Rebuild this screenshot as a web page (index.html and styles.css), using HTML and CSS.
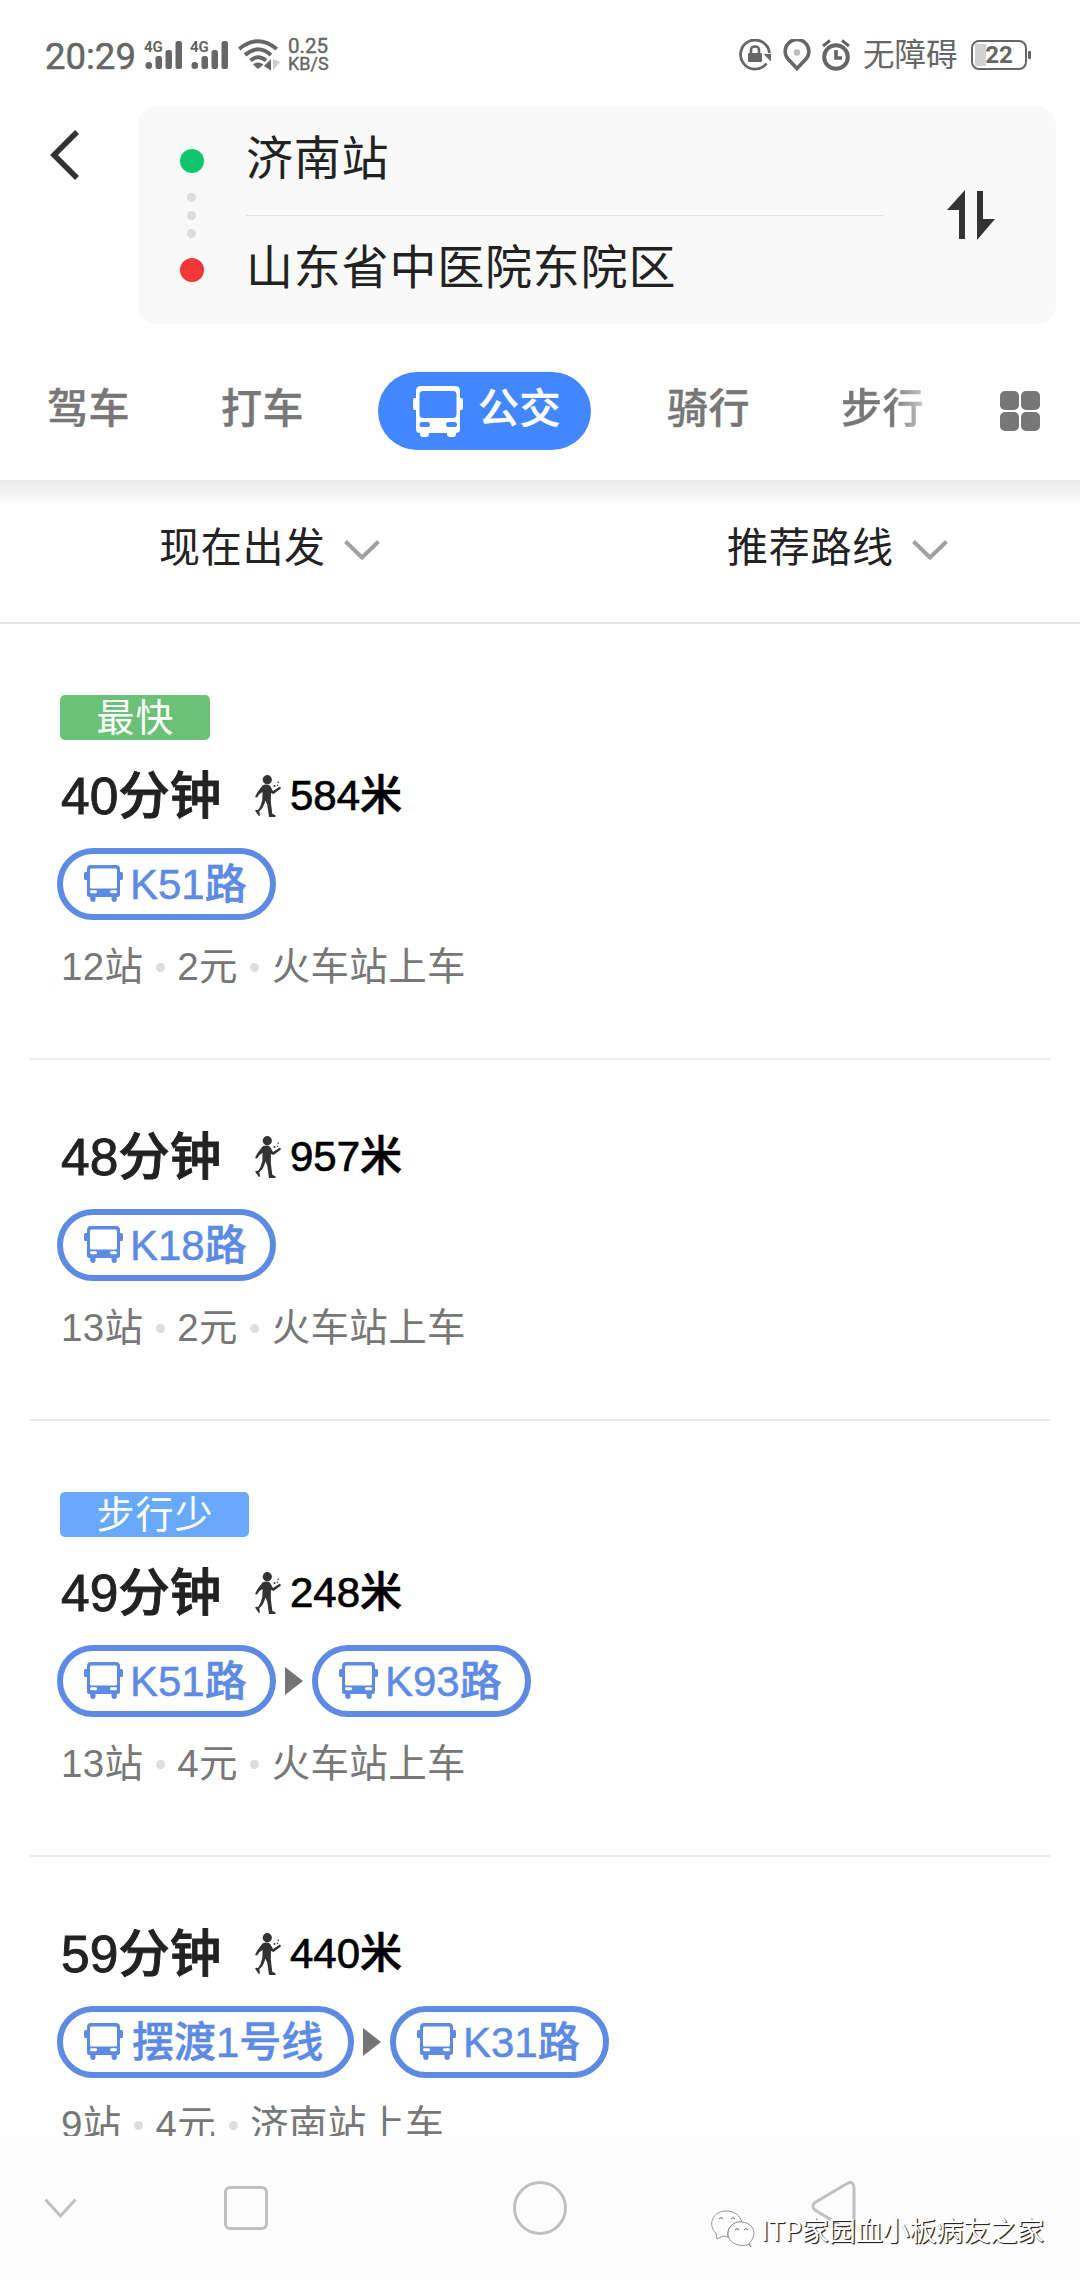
FILE: index.html
```
<!DOCTYPE html>
<html lang="zh-CN">
<head>
<meta charset="utf-8">
<title>公交路线</title>
<link rel="stylesheet" href="styles.css">
</head>
<body>
<svg width="0" height="0" class="defs">
  <symbol id="bus" viewBox="0 0 39 37">
    <path fill="currentColor" fill-rule="evenodd" d="M7 0H32Q36 0 36 4V7H37.500Q39 7 39 8.500V13.500Q39 15 37.500 15H36V29.500Q36 32 33.500 32H32.800V34.500Q32.800 37 30.300 37T27.500 34.500V32H11.500V34.500Q11.500 37 9 37T6.200 34.500V32H5.500Q3 32 3 29.500V15H1.500Q0 15 0 13.500V8.500Q0 7 1.500 7H3V4Q3 0 7 0ZM7.500 3.500Q6 3.500 6 5V22Q6 23.500 7.500 23.500H31.500Q33 23.500 33 22V5Q33 3.500 31.500 3.500ZM7.500 25.300Q6 25.300 6 26.700T7.500 28.200H11.500Q13 28.200 13 26.700T11.500 25.300ZM27.500 25.300Q26 25.300 26 26.700T27.500 28.200H31.500Q33 28.200 33 26.700T31.500 25.300Z"/>
  </symbol>
  <symbol id="walk" viewBox="0 0 26 42">
    <circle cx="12.300" cy="4.700" r="4.600"/>
    <path d="M7.500 10.500C10 9 14 9 15.500 11.500L18 16L25 11.500L26 13.500L18.500 19L16 18L15.800 26L16.300 31L17.300 38.800L20.500 40.200V42H14L12.300 30L10.500 25.500L9.500 28.500L7.500 33L4.300 36.200L5 40.500L3.800 41L0 35.500L1.300 34.800L3 35L5.300 31.500L7.300 25L7.600 17L4.500 19L2 22.500L0 22L2.500 17Z"/>
    <circle cx="19.500" cy="11" r="1"/><circle cx="23.300" cy="7.300" r=".8"/><circle cx="22.500" cy="10.300" r=".8"/>
  </symbol>
  <symbol id="signal" viewBox="0 0 38 28">
    <rect x="1.500" y="21" width="6.500" height="7" rx="3"/><rect x="11.500" y="15" width="6.500" height="13" rx="2.500"/><rect x="21.500" y="9" width="6.500" height="19" rx="2.500"/><rect x="31.500" y="0" width="6.500" height="28" rx="2.500"/>
  </symbol>
</svg>

<header class="status">
  <span class="clock">20:29</span>
  <span class="cell"><svg class="bars"><use href="#signal"/></svg><small>4G</small></span>
  <span class="cell cell-2"><svg class="bars"><use href="#signal"/></svg><small>4G</small></span>
  <svg class="wifi" viewBox="0 0 42 32"><g fill="none" stroke="#666" stroke-width="3.800"><path d="M1.200 10Q20 -5.500 38.800 10"/><path d="M7 16Q20 4.500 33 16"/><path d="M12.500 21.500Q20 15 28 21.500"/></g><path fill="#666" d="M15 25.500Q20 21.500 25.500 25.500L20 30ZM26 27L33 20V31.500Z"/><path fill="#ccc" d="M35 20V31.500L42 23Z"/></svg>
  <span class="speed"><b>0.25</b><i>KB/S</i></span>
  <span class="spacer"></span>
  <svg class="s-lock" viewBox="0 0 32 32"><path d="M30.500 14A14.500 14.500 0 1 0 27.500 24.500" fill="none" stroke="#666" stroke-width="2.800"/><path fill="#666" d="M24.500 15H32V22.500ZM9 15Q9 14 10 14H22Q23 14 23 15V22Q23 23 22 23H10Q9 23 9 22Z"/><path d="M12 14V11Q12 7.500 16 7.500T20 11V14" fill="none" stroke="#666" stroke-width="2.600"/></svg>
  <svg class="s-pin" viewBox="0 0 28 32"><path d="M14 29.500L5 20A11.800 11.800 0 1 1 23 20Z" fill="none" stroke="#666" stroke-width="3.600"/><circle cx="14" cy="13.500" r="3.300" fill="#bbb"/></svg>
  <svg class="s-alarm" viewBox="0 0 28 32"><circle cx="14" cy="18" r="11.800" fill="none" stroke="#666" stroke-width="4"/><path d="M14 11V19H20" fill="none" stroke="#666" stroke-width="3.600"/><path d="M1 7L8 1.500M27 7L20 1.500" stroke="#666" stroke-width="3"/></svg>
  <span class="mode">无障碍</span>
  <span class="battery">22</span>
</header>

<section class="search">
  <svg class="back" viewBox="0 0 30 50"><path d="M27 2L4 25L27 48" fill="none" stroke="#333" stroke-width="5.600"/></svg>
  <div class="box">
    <div class="marks"><i class="start"></i><i class="dot"></i><i class="dot"></i><i class="dot"></i><i class="end"></i></div>
    <div class="places"><div class="from">济南站</div><div class="to">山东省中医院东院区</div></div>
    <svg class="swap" viewBox="0 0 49 50"><path fill="#333" d="M18 0V49H12V20H0ZM30 1H36V29H48L30 50Z"/></svg>
  </div>
</section>

<nav class="tabs">
  <span class="tab">驾车</span><span class="tab">打车</span>
  <span class="active"><svg viewBox="0 0 50 51"><path fill="#fff" fill-rule="evenodd" d="M8 0H42Q47 0 47 5V12H48Q50 12 50 14V22Q50 24 48 24H47V43Q47 47 43 47V48Q43 51 40 51H37Q34 51 34 48V47H16V48Q16 51 13 51H10Q7 51 7 48V47Q3 47 3 43V24H2Q0 24 0 22V14Q0 12 2 12H3V5Q3 0 8 0ZM10 5Q6.500 5 6.500 9V28Q6.500 32 10 32H40Q43.500 32 43.500 28V9Q43.500 5 40 5ZM9 36Q6.500 36 6.500 38.500T9 41H14.500Q17 41 17 38.500T14.500 36ZM35.500 36Q33 36 33 38.500T35.500 41H41.500Q44 41 44 38.500T41.500 36Z"/></svg><span>公交</span></span>
  <span class="tab">骑行</span><span class="tab fade">步行</span>
  <span class="grid"><i></i><i></i><i></i><i></i></span>
</nav>

<main class="list">
  <div class="filters">
    <span class="filter">现在出发<svg viewBox="0 0 36 20"><path d="M1.500 1.500L18 17.500L34.500 1.500" fill="none" stroke="#a0a0a0" stroke-width="4"/></svg></span>
    <span class="filter second">推荐路线<svg viewBox="0 0 36 20"><path d="M1.500 1.500L18 17.500L34.500 1.500" fill="none" stroke="#a0a0a0" stroke-width="4"/></svg></span>
  </div>

  <article class="route tagged">
    <div class="tag fast">最快</div>
    <div class="time"><strong>40分钟</strong><svg class="walk"><use href="#walk"/></svg><span>584米</span></div>
    <div class="lines"><span class="line"><svg><use href="#bus"/></svg>K51路</span></div>
    <div class="meta">12站<i></i>2元<i></i>火车站上车</div>
  </article>
  <article class="route">
    <div class="time"><strong>48分钟</strong><svg class="walk"><use href="#walk"/></svg><span>957米</span></div>
    <div class="lines"><span class="line"><svg><use href="#bus"/></svg>K18路</span></div>
    <div class="meta">13站<i></i>2元<i></i>火车站上车</div>
  </article>
  <article class="route tagged">
    <div class="tag less">步行少</div>
    <div class="time"><strong>49分钟</strong><svg class="walk"><use href="#walk"/></svg><span>248米</span></div>
    <div class="lines"><span class="line"><svg><use href="#bus"/></svg>K51路</span><b class="next"></b><span class="line"><svg><use href="#bus"/></svg>K93路</span></div>
    <div class="meta">13站<i></i>4元<i></i>火车站上车</div>
  </article>
  <article class="route">
    <div class="time"><strong>59分钟</strong><svg class="walk"><use href="#walk"/></svg><span>440米</span></div>
    <div class="lines"><span class="line wide"><svg><use href="#bus"/></svg>摆渡1号线</span><b class="next"></b><span class="line"><svg><use href="#bus"/></svg>K31路</span></div>
    <div class="meta">9站<i></i>4元<i></i>济南站上车</div>
  </article>
</main>

<footer class="sysnav">
  <svg class="n-down" viewBox="0 0 33 20"><path d="M1.500 1.500L16.500 18L31.500 1.500"/></svg>
  <svg class="n-square" viewBox="0 0 44 44"><rect x="1.500" y="1.500" width="41" height="41" rx="4.500"/></svg>
  <svg class="n-circle" viewBox="0 0 54 54"><circle cx="27" cy="27" r="25.500"/></svg>
  <svg class="n-back" viewBox="0 0 45 52"><path d="M37 2L4 21.500Q0 25 4 29L37 49Q43 51 43 46V6Q42 0 37 2Z"/></svg>
  <div class="watermark">
    <svg viewBox="0 0 44 38"><g fill="#fff" stroke="#777" stroke-width=".8"><path d="M5 23C-4 15 2 1 15 1C24 1 29 6 31 12C22 12 15 18 17 27L12 26L6 29Z"/><path d="M38 34C31 38 17 34 17 24C17 15 25 11 31 12C43 13 47 25 38 33L40 37Z"/></g><g fill="none" stroke="#666"><path d="M8 9Q10 6 12 9M20 9Q22 6 24 9M24 20Q26 17 28 20M33 20Q35 17 37 20"/></g></svg>
    <span>ITP家园血小板病友之家</span>
  </div>
</footer>
</body>
</html>
```
FILE: styles.css
```
* { box-sizing: border-box; }
body {
  margin: 0;
  width: 1080px;
  height: 2280px;
  overflow: hidden;
  display: flex;
  flex-direction: column;
  background: #fff;
  color: #222;
  font-family: "Liberation Sans", "Noto Sans CJK SC", sans-serif;
  white-space: nowrap;
}
svg { display: block; flex: none; }
i { font-style: normal; }
.defs { position: absolute; }

/* status bar */
.status {
  height: 107px;
  flex: none;
  display: flex;
  align-items: flex-start;
  padding: 39px 53px 0 45px;
  color: #666;
  fill: #666;
  font-family: Roboto, "Noto Sans CJK SC", sans-serif;
}
.clock { width: 99px; font-size: 36.500px; line-height: 35px; -webkit-text-stroke: .5px #666; }
.cell { position: relative; width: 38px; height: 28px; margin-top: 2px; }
.cell-2 { margin-left: 8px; }
.bars { width: 38px; height: 28px; }
.cell small { position: absolute; left: 0; top: 0; font-size: 15px; line-height: 12px; font-weight: 700; }
.wifi { width: 42px; height: 32px; margin-left: 10px; }
.speed { margin: -2px 0 0 8px; display: flex; flex-direction: column; }
.speed b, .speed i { line-height: 18px; -webkit-text-stroke: .4px #666; }
.speed b { font-size: 20.500px; font-weight: 400; }
.speed i { font-size: 18px; line-height: 17px; }
.spacer { flex: 1; }
.s-lock { width: 32px; height: 32px; }
.s-pin { width: 28px; height: 32px; margin-left: 12px; }
.s-alarm { width: 28px; height: 32px; margin-left: 11px; }
.mode { margin-left: 13px; width: 108px; font-size: 31.500px; line-height: 33px; }
.battery {
  position: relative;
  width: 56px;
  height: 30px;
  margin-top: 1px;
  border: 2px solid #666;
  border-radius: 8px;
  background: linear-gradient(#d2d2d2, #d2d2d2) 2px 2px / 11px 22px no-repeat;
  font-size: 24px;
  font-weight: 700;
  line-height: 27px;
  text-align: center;
}
.battery::after { content: ""; position: absolute; right: -6px; top: 9px; width: 3px; height: 8px; background: #666; border-radius: 1px; }

/* origin and destination */
.search { height: 217px; flex: none; display: flex; padding-left: 50px; }
.back { width: 30px; height: 50px; margin-top: 23px; }
.box {
  margin-left: 58px;
  width: 918px;
  height: 217px;
  display: flex;
  background: #f9f9f9;
  border-radius: 18px;
}
.marks { width: 24px; margin: 42px 0 0 42px; display: flex; flex-direction: column; align-items: center; }
.start, .end { width: 24px; height: 24px; border-radius: 50%; background: #0fc66e; margin-bottom: 20px; }
.end { background: #f13838; margin-top: 11px; }
.dot { width: 9px; height: 9px; border-radius: 50%; background: #ddd; margin: 0 1px 9px 0; }
.places { width: 638px; margin: 0 2px 0 42px; font-size: 47px; letter-spacing: .8px; }
.from { height: 109px; line-height: 104px; border-bottom: 1px solid #e2e2e2; }
.to { line-height: 104px; }
.swap { width: 49px; height: 50px; margin: 83px 0 0 61px; }

/* travel modes */
.tabs {
  height: 156px;
  flex: none;
  display: flex;
  align-items: flex-start;
  padding: 48px 40px 0 47px;
  color: #777;
  font-size: 41px;
  font-weight: 500;
}
.tab, .active > span { line-height: 75px; letter-spacing: .5px; -webkit-text-stroke: .4px; }
.tab { width: 174px; }
.active {
  display: flex;
  width: 213px;
  height: 78px;
  margin: 0 76px 0 -17px;
  padding-left: 35px;
  border-radius: 39px;
  background: #4387ff;
  color: #fff;
}
.active svg { width: 50px; height: 51px; margin: 14px 15px 0 0; }
.fade {
  width: 159px;
  background: linear-gradient(90deg, #777 50px, #c8c8c8 84px);
  background-clip: text;
  -webkit-background-clip: text;
  color: transparent;
}
.grid { display: grid; grid-template-columns: 19px 19px; gap: 2px; margin-top: 19px; }
.grid i { height: 19px; border-radius: 5px; background: #777; }

.list { flex: 1; min-height: 0; overflow: hidden; background: linear-gradient(#e9e9e9, #f4f4f4 14px, #fff 26px) no-repeat; }
.filters { height: 144px; display: flex; padding: 35px 0 0 159px; border-bottom: 2px solid #e3e3e3; }
.filter { width: 568px; display: flex; font-size: 41px; line-height: 67px; letter-spacing: .7px; }
.filter svg { width: 36px; height: 20px; margin: 25px 0 0 18px; }
.second { width: 300px; }

/* route cards */
.route { height: 361px; margin: 0 30px; padding: 67px 0 0 27px; border-bottom: 2px solid #ececec; }
.tagged { height: 436px; padding-top: 71px; }
.tag {
  width: max-content;
  height: 45px;
  margin: 0 0 26px 3px;
  padding: 0 35.500px 0 36.500px;
  border-radius: 5px;
  color: #fff;
  font-size: 38px;
  line-height: 46px;
  letter-spacing: 1px;
}
.fast { background: #6bc177; }
.less { background: #68a9fb; }
.time { height: 82px; display: flex; padding-left: 4px; line-height: 60px; }
.time strong { width: 194px; font-size: 51.500px; font-weight: 500; -webkit-text-stroke: .9px #222; }
.walk { width: 26px; height: 42px; margin: 9px 9px 0 0; fill: #333; }
.time span { color: #000; font-size: 42px; font-weight: 500; -webkit-text-stroke: .7px #000; }
.lines { display: flex; align-items: center; height: 72px; }
.line {
  display: flex;
  width: 219px;
  height: 72px;
  padding-left: 21px;
  border: 6px solid #5d8be3;
  border-radius: 36px;
  color: #5d8be3;
  font-size: 42px;
  font-weight: 500;
  line-height: 62px;
  -webkit-text-stroke: .5px #5d8be3;
}
.line svg { width: 39px; height: 37px; margin: 11px 7px 0 0; }
.wide { width: 297px; }
.wide svg { margin-right: 9px; }
.next { margin: 0 9px; border-left: 18px solid #757575; border-top: 14px solid transparent; border-bottom: 14px solid transparent; }
.meta { display: flex; align-items: center; margin: 17px 0 0 4px; color: #777; font-size: 38.500px; line-height: 60px; letter-spacing: .3px; }
.meta i { width: 9px; height: 9px; margin: 0 12.500px; border-radius: 50%; background: #ddd; }

/* system navigation */
.sysnav { position: relative; height: 144px; flex: none; display: flex; align-items: flex-start; padding-left: 44px; background: #fcfcfc; }
.sysnav > svg { fill: none; stroke: #c0c0c0; stroke-width: 3; }
.n-down { width: 33px; height: 20px; margin-top: 62px; }
.n-square { width: 44px; height: 44px; margin: 50px 0 0 147px; }
.n-circle { width: 54px; height: 54px; margin: 45px 0 0 245px; }
.n-back { width: 45px; height: 52px; margin: 45px 0 0 244px; }
.watermark { position: absolute; left: 711px; top: 74px; display: flex; align-items: flex-start; color: #fff; font-size: 27px; line-height: 40px; font-family: "Noto Sans CJK SC", sans-serif; letter-spacing: -.1px; text-shadow: 1px 1px 1px #222, 1px 1px 0 #555; }
.watermark svg { width: 44px; height: 38px; margin-right: 6px; }
```
